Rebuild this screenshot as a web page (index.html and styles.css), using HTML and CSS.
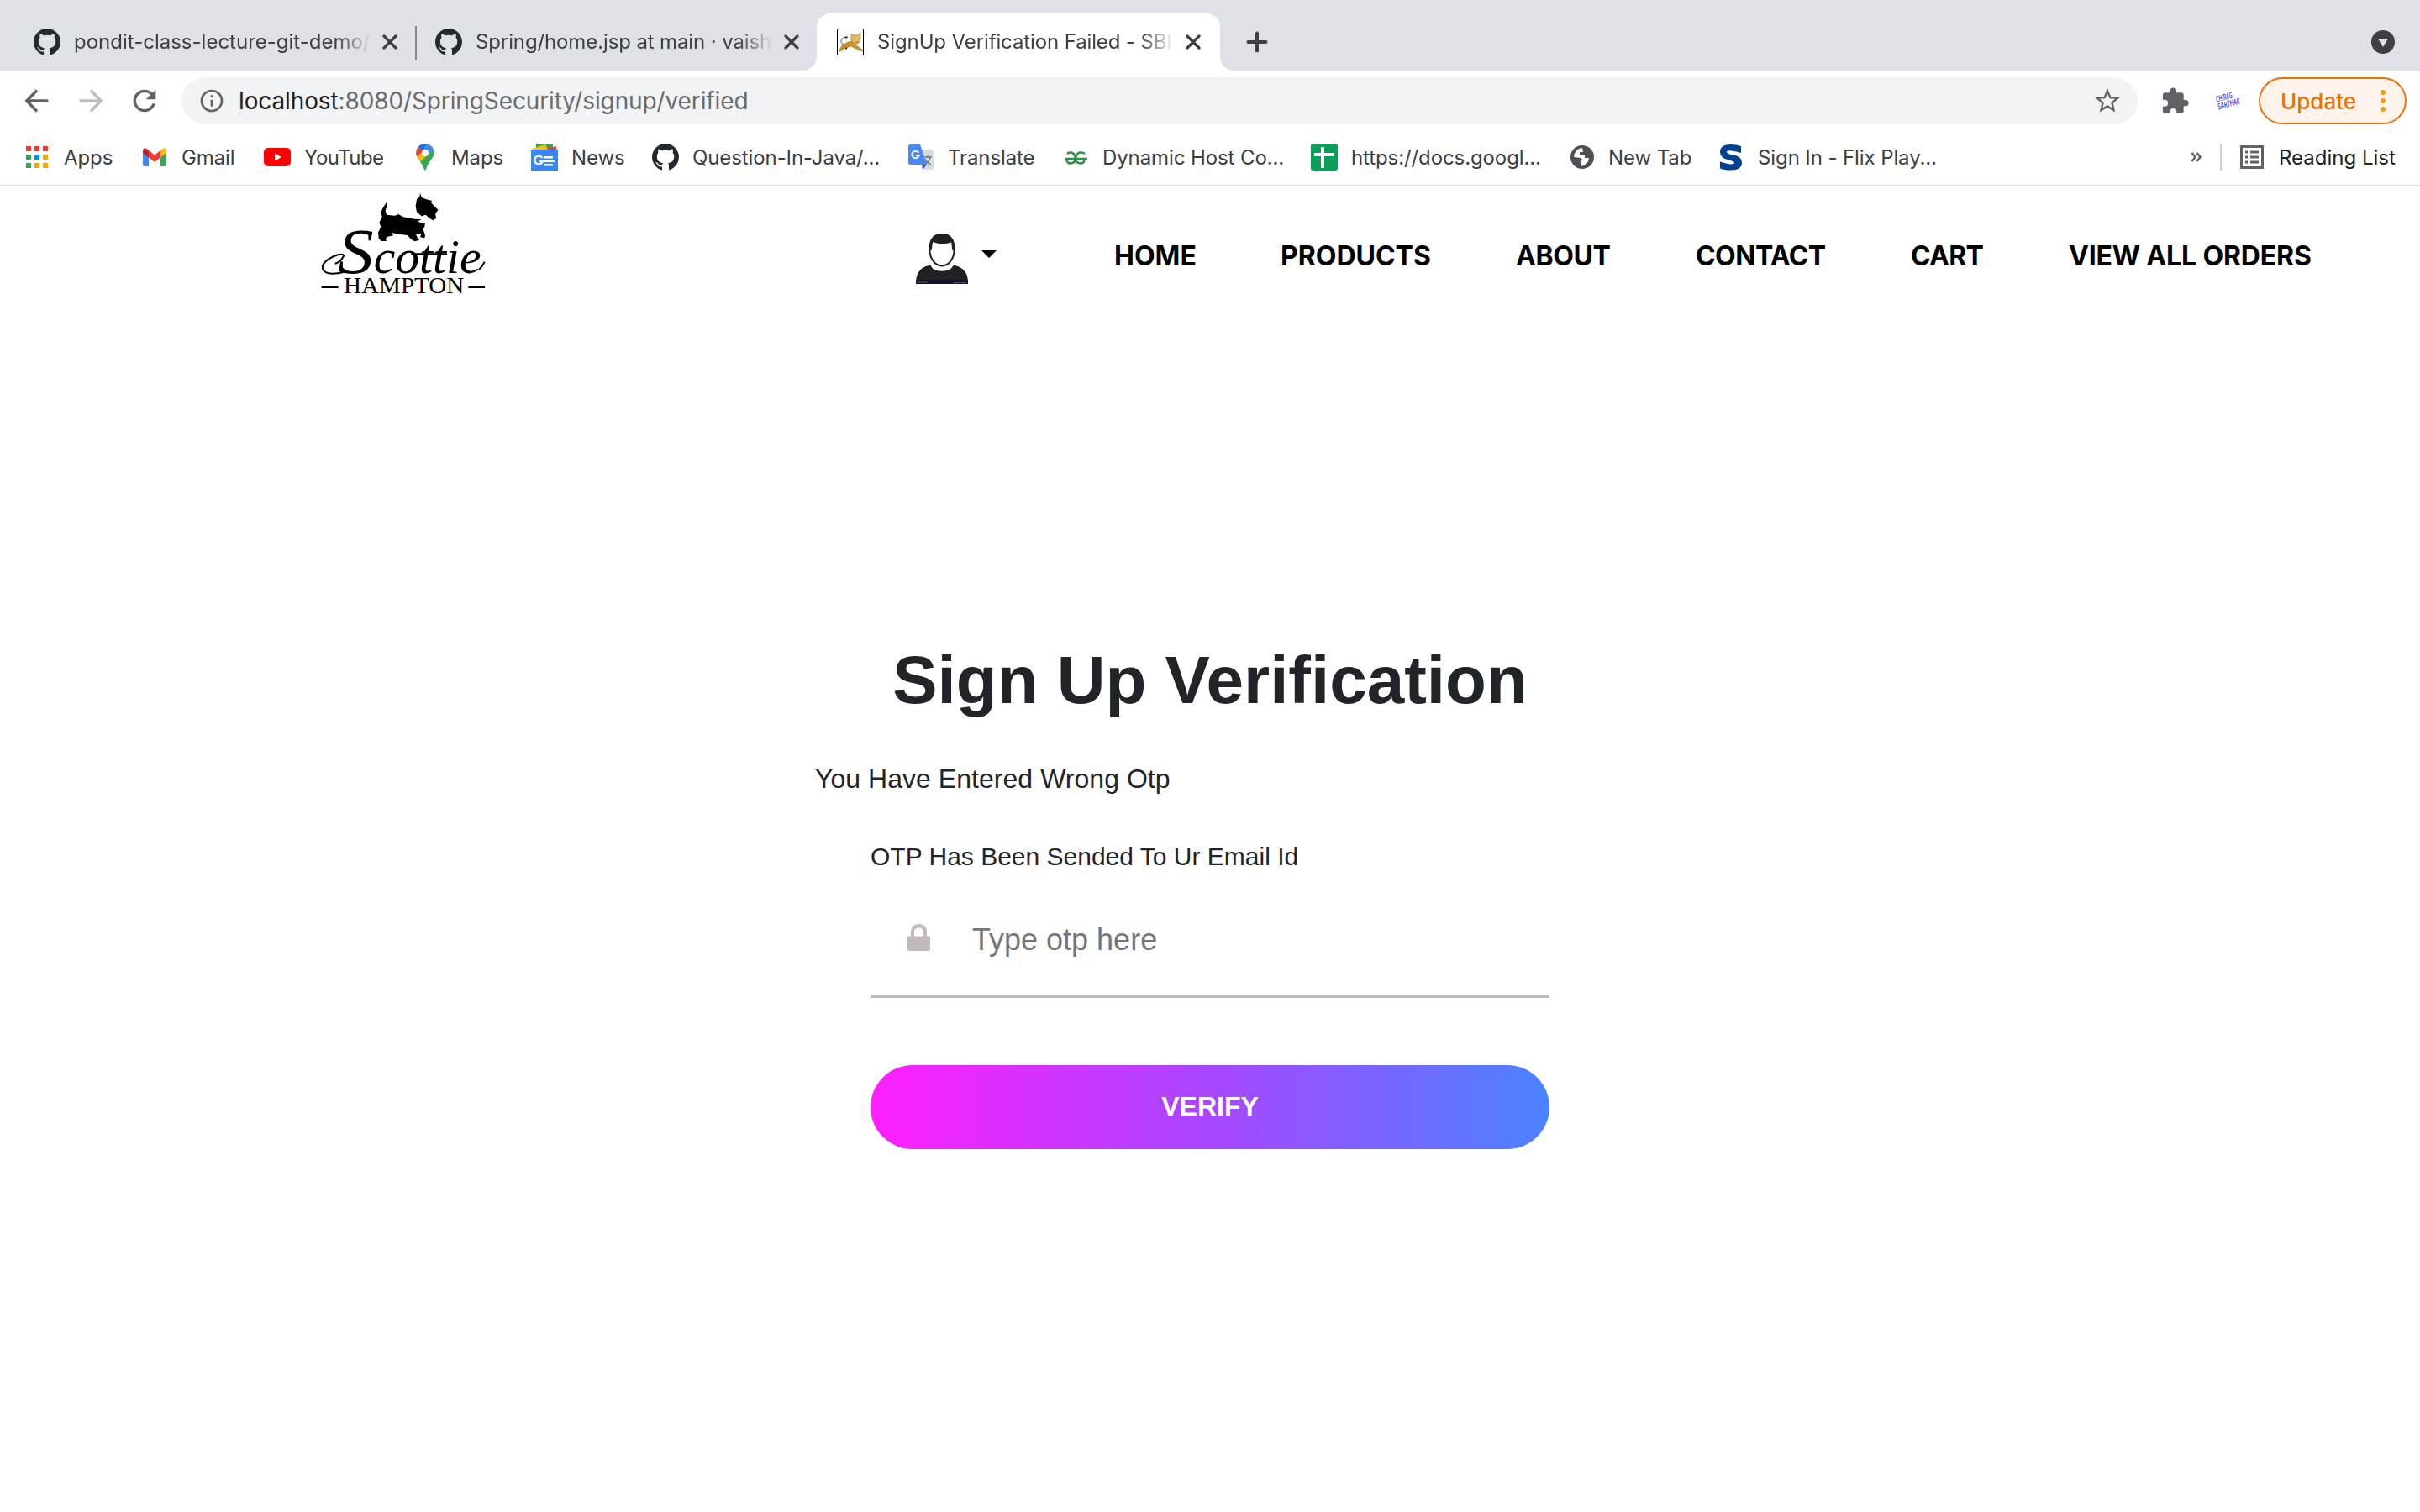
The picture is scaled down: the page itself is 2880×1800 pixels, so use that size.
FILE: index.html
```html
<!DOCTYPE html>
<html lang="en">
<head>
<meta charset="utf-8">
<title>SignUp Verification Failed</title>
<link rel="stylesheet" href="styles.css">
</head>
<body>
<svg class="defs" width="0" height="0">
  <symbol id="github" viewBox="0 0 16 16"><path d="M8 0C3.58 0 0 3.58 0 8c0 3.54 2.29 6.53 5.47 7.59.4.07.55-.17.55-.38 0-.19-.01-.82-.01-1.49-2.01.37-2.53-.49-2.69-.94-.09-.23-.48-.94-.82-1.13-.28-.15-.68-.52-.01-.53.63-.01 1.08.58 1.23.82.72 1.21 1.87.87 2.33.66.07-.52.28-.87.51-1.07-1.78-.2-3.64-.89-3.64-3.95 0-.87.31-1.59.82-2.15-.08-.2-.36-1.02.08-2.12 0 0 .67-.21 2.2.82.64-.18 1.32-.27 2-.27s1.36.09 2 .27c1.53-1.04 2.2-.82 2.2-.82.44 1.1.16 1.92.08 2.12.51.56.82 1.27.82 2.15 0 3.07-1.87 3.75-3.65 3.95.29.25.54.73.54 1.48 0 1.07-.01 1.93-.01 2.2 0 .21.15.46.55.38A8.01 8.01 0 0 0 16 8c0-4.42-3.58-8-8-8z"/></symbol>
  <symbol id="close" viewBox="0 0 18 18"><path d="M2 2 16 16M16 2 2 16" stroke="#3c4043" stroke-width="3.2" stroke-linecap="round"/></symbol>
</svg>

<div class="tabstrip">
  <div class="tab tab-first">
    <svg class="favicon gh"><use href="#github"/></svg>
    <span class="tab-title">pondit-class-lecture-git-demo/</span>
    <svg class="close"><use href="#close"/></svg>
  </div>
  <div class="tab-divider"></div>
  <div class="tab tab-second">
    <svg class="favicon gh"><use href="#github"/></svg>
    <span class="tab-title tight">Spring/home.jsp at main · vaish</span>
    <svg class="close"><use href="#close"/></svg>
  </div>
  <div class="tab tab-active">
    <svg class="favicon" viewBox="0 0 32 32">
      <rect x=".5" y=".5" width="31" height="31" fill="#fff" stroke="#000" stroke-width="1"/>
      <path d="M12 20Q4 19 5 14Q7 9 13 11" fill="none" stroke="#444" stroke-width=".8"/>
      <path d="M9 10l4-1-2 3zM8 21l5 1-2 3z" fill="#222"/>
      <path d="M2 27 6 20 13 16 18 15 22 19 30 25 31 27 26 26 17 21 10 23 5 27Z" fill="#cf8f2b" stroke="#8f641f" stroke-width=".4"/>
      <path d="M17 6 20 8 25 8 28 5 28 12 26 17 22 19 17 14Z" fill="#eebd55" stroke="#8f641f" stroke-width=".6"/>
      <path d="M20 12l2 1m3 0 2-1m-5 4h3" stroke="#6b4a1c" stroke-width=".8"/>
    </svg>
    <span class="tab-title tight">SignUp Verification Failed - SBI</span>
    <svg class="close"><use href="#close"/></svg>
  </div>
  <svg class="new-tab" viewBox="0 0 26 26"><path d="M13 2.500V23.500M2.500 13H23.500" stroke="#3c4043" stroke-width="4" stroke-linecap="round"/></svg>
  <svg class="tab-search" viewBox="0 0 28 28"><circle cx="14" cy="14" r="14" fill="#3c4043"/><path d="M8 10H20L14 20Z" fill="#dee1e6"/></svg>
</div>

<div class="toolbar">
  <svg class="nav-icon" viewBox="0 0 24 24" fill="none" stroke="#5f6368" stroke-width="2"><path d="M20 12H5M12 4.500 4.700 12 12 19.500"/></svg>
  <svg class="nav-icon" viewBox="0 0 24 24" fill="none" stroke="#babcbe" stroke-width="2"><path d="M4 12H19M12 4.500 19.300 12 12 19.500"/></svg>
  <svg class="nav-icon" viewBox="0 0 24 24" fill="#5f6368"><path d="M17.650 6.350A8 8 0 1 0 19.730 14h-2.080A6 6 0 1 1 12 6c1.660 0 3.140.69 4.220 1.780L13 11h7V4z"/></svg>
  <div class="omnibox">
    <svg class="info" viewBox="0 0 24 24" fill="#5f6368"><path d="M11 7h2v2h-2zm0 4h2v6h-2zm1-9a10 10 0 1 0 0 20 10 10 0 0 0 0-20zm0 18a8 8 0 1 1 0-16 8 8 0 0 1 0 16z"/></svg>
    <span class="url"><b>localhost</b>:8080/SpringSecurity/signup/verified</span>
    <svg class="star" viewBox="0 0 24 24" fill="#5f6368"><path d="M22 9.240l-7.190-.62L12 2 9.190 8.630 2 9.240l5.460 4.730L5.820 21 12 17.270 18.180 21l-1.630-7.030zM12 15.400l-3.760 2.270 1-4.280-3.320-2.880 4.380-.38L12 6.100l1.710 4.040 4.380.38-3.320 2.880 1 4.280z"/></svg>
  </div>
  <svg class="puzzle" viewBox="0 0 24 24" fill="#5f6368"><path d="M20.500 11H19V7c0-1.100-.9-2-2-2h-4V3.500a2.500 2.500 0 0 0-5 0V5H4c-1.100 0-1.990.9-1.990 2v3.800H3.500a2.700 2.700 0 0 1 0 5.400H2V20c0 1.100.9 2 2 2h3.800v-1.500a2.700 2.700 0 0 1 5.400 0V22H17c1.100 0 2-.9 2-2v-4h1.500a2.500 2.500 0 0 0 0-5z"/></svg>
  <svg class="extension" viewBox="0 0 32 28"><g transform="rotate(-15 16 14)" fill="#3a40e0" font-family="Open Sans" font-weight="600" font-style="italic"><text x="2" y="12" font-size="10" textLength="20" lengthAdjust="spacingAndGlyphs">CHIRAG</text><text x="2" y="21" font-size="10" textLength="27" lengthAdjust="spacingAndGlyphs">SARTHAK</text></g></svg>
  <div class="update"><span>Update</span><svg viewBox="0 0 6 26" fill="#fa9a00"><circle cx="3" cy="3" r="3"/><circle cx="3" cy="13" r="3"/><circle cx="3" cy="23" r="3"/></svg></div>
</div>

<div class="bookmarks">
  <div class="bookmark-list">
    <div class="bookmark"><svg viewBox="0 0 32 32"><path d="M3 3h6v6H3zm10 0h6v6h-6zm10 0h6v6h-6z" fill="#f8342c"/><path d="M3 13h6v6H3zM3 23h6v6H3z" fill="#2fa157"/><path d="M13 13h6v6h-6z" fill="#0b8bf4"/><path d="M23 13h6v6h-6zM13 23h6v6h-6zm10 0h6v6h-6z" fill="#f8a400"/></svg><span>Apps</span></div>
    <div class="bookmark"><svg viewBox="0 0 32 32"><path d="M2 9v16q0 2 2 2h5V14z" fill="#4285f4"/><path d="M23 14v13h5q2 0 2-2V9z" fill="#34a853"/><path d="M9 8l7 5.500L23 8v8.500L16 22l-7-5.500z" fill="#ea4335"/><path d="M2 9.500Q2 5 5.500 5.400L9 8v8.500l-7-5.500z" fill="#c5221f"/><path d="M30 9.500Q30 5 26.500 5.400L23 8v8.500l7-5.500z" fill="#fbbc04"/></svg><span>Gmail</span></div>
    <div class="bookmark youtube"><svg viewBox="0 0 32 32"><rect y="5" width="32" height="22" rx="5" fill="#f00"/><path d="M13 11.500v9l8-4.500z" fill="#fff"/></svg><span>YouTube</span></div>
    <div class="bookmark"><svg viewBox="0 0 32 32"><path d="M17 0a11 11 0 0 0-8.300 3.900l5.300 5 6-8.300Q18.500 0 17 0z" fill="#1a73e8"/><path d="M8.700 3.900A11 11 0 0 0 7.500 16l7.500-7.500z" fill="#ea4335"/><path d="M20 .6l-6 8.300 6.500 4L27 6.700A11 11 0 0 0 20 .6z" fill="#4285f4"/><path d="M7.500 16q.8 2 3.500 5.500L22 11l-8-1z" fill="#fbbc04"/><path d="M27 6.700 11 21.500q3.500 4.500 5 9.500.9 1.500 1.800 0 1-5 5.200-10.500c5-6.500 6-9 4-13.800z" fill="#34a853"/><circle cx="17" cy="11" r="4" fill="#fff"/></svg><span>Maps</span></div>
    <div class="bookmark"><svg viewBox="0 0 32 32"><path d="M6 0h20v10H6z" fill="#34a853"/><path d="M16 6l14-3 1 7H16z" fill="#ea4335"/><path d="M1 6 17 1l4 8H3z" fill="#fbbc04"/><path d="M0 7h32v25H0z" fill="#3a86f7"/><path d="M13.500 17A5 5 0 1 0 14 21H10" fill="none" stroke="#fff" stroke-width="2.400"/><path d="M16 15h10v2.500H16zm0 4.500h12V22H16zm0 4.500h10v2.500H16z" fill="#fff"/></svg><span>News</span></div>
    <div class="bookmark"><svg class="gh"><use href="#github"/></svg><span>Question-In-Java/...</span></div>
    <div class="bookmark"><svg viewBox="0 0 32 32"><path d="M13 7h16q2 0 2 2v20q0 2-2 2H20z" fill="#dcdcdc"/><path d="M17 25h6l-5 6z" fill="#3153c9"/><path d="M3 1h12l8 24H3q-2 0-2-2V3q0-2 2-2z" fill="#4889f4"/><path d="M13.200 10.800A4.200 4.200 0 1 0 13.700 14H10" fill="none" stroke="#fff" stroke-width="1.900"/><path d="M20 16h9M24 13v3M27 16q-1 6-7 9M21 18q2 5 7 7" fill="none" stroke="#607d8b" stroke-width="1.500"/></svg><span>Translate</span></div>
    <div class="bookmark"><svg viewBox="0 0 32 32"><path d="M6 12q2-2 5-1.500 4 1 5 7 1-6 5-7 4-.5 6 1.500M6 19q-1 4 4 4.500 6-.5 6-6 0 5.500 6 6 5-.5 4-4.500M3 18H30" fill="none" stroke="#2f8d46" stroke-width="2.500"/></svg><span>Dynamic Host Co...</span></div>
    <div class="bookmark"><svg viewBox="0 0 32 32"><rect width="32" height="32" rx="3" fill="#0a9f58"/><path d="M4 11h8V4h4v7h12v4H16v14h-4V15H4z" fill="#fff"/></svg><span>https://docs.googl...</span></div>
    <div class="bookmark"><svg viewBox="0 0 32 32"><circle cx="17" cy="16" r="14" fill="#4d5156"/><path d="M17 5q-9 1-10 11l8 1 2 2-2 2v6q9-1 10-10h-5v-3l-6-1v-3h4z" fill="#fff"/></svg><span>New Tab</span></div>
    <div class="bookmark"><svg viewBox="0 0 32 32"><path d="M28 3v8Q11 6 11 10q0 2 8 3.500 10 2 10 9 0 9-13 9-8 0-13-2v-8q16 5 17 1.500 0-2-7-3.500Q3 17 3 10 3 1 16 1q6 0 12 2z" fill="#00418f"/></svg><span>Sign In - Flix Play...</span></div>
  </div>
  <svg class="more" viewBox="0 0 14 14"><path d="M1.500 2l4 5-4 5M7.500 2l4 5-4 5" fill="none" stroke="#5f6368" stroke-width="2.500"/></svg>
  <div class="bar-divider"></div>
  <svg class="reading-icon" viewBox="0 0 28 28"><path d="M1.500 1.500h25v25h-25z" fill="none" stroke="#5f6368" stroke-width="3"/><path d="M6 6.500h3v3H6zm6 0h10v3H12zM6 12.500h3v3H6zm6 0h10v3H12zM6 18.500h3v3H6zm6 0h10v3H12z" fill="#5f6368"/></svg>
  <span class="reading">Reading List</span>
</div>

<header class="site-header">
  <svg class="logo" viewBox="0 21 720 429">
    <path d="M300 78 302 92 296 105 300 122 330 125 342 120 360 130 400 137 424 138 412 146 432 154 438 150 436 165 430 172 438 195 436 205 420 202 424 190 405 192 412 208 418 212 400 217 388 210 375 195 350 192 318 186 324 196 304 200 296 208 300 216 280 216 272 205 270 185 280 165 274 150 284 130 280 112 290 92Z"/>
    <path d="M420 45 426 60 440 66 462 72 460 80 484 104 474 120 478 134 466 142 450 132 440 122 425 127 408 112 404 92 408 66 418 58Z"/>
    <path d="M116 296Q134 294 148 268 142 258 112 270 66 292 72 316 84 342 150 326" fill="none" stroke="#000" stroke-width="6"/>
    <path d="M388 262H516M630 318Q642 308 650 290" fill="none" stroke="#000" stroke-width="6"/>
    <text y="330" font-family="Liberation Serif" font-style="italic"><tspan x="126" font-size="226" textLength="128" lengthAdjust="spacingAndGlyphs">S</tspan><tspan x="254" font-size="168" textLength="384" lengthAdjust="spacingAndGlyphs">cottie</tspan></text>
    <path d="M68 381H128M592 381H651" stroke="#000" stroke-width="6"/>
    <text x="147" y="403" font-family="Liberation Serif" font-size="84" textLength="430" lengthAdjust="spacingAndGlyphs">HAMPTON</text>
  </svg>
  <svg class="person" viewBox="60 53 186 181">
    <ellipse cx="153" cy="112" rx="44" ry="57" fill="#fff" stroke="#231f20" stroke-width="6"/>
    <path d="M107 118Q102 53 153 53T199 118L190 112 187 85Q153 96 120 83L116 112Z" fill="#231f20"/>
    <path d="M112 167Q120 188 153 188T194 167Q242 175 246 220V234H60V220Q66 172 112 167Z" fill="#231f20"/>
    <path d="M60 219H246V234H60Z" fill="#12102b"/><path d="M66 228H100M194 230H240" stroke="#777489" stroke-width="3" stroke-dasharray="5 2"/>
  </svg>
  <svg class="caret" viewBox="0 0 18 9"><path d="M0 0H18L9 9Z"/></svg>
  <nav class="menu"><a>HOME</a><a>PRODUCTS</a><a class="about">ABOUT</a><a class="contact">CONTACT</a><a class="cart">CART</a><a class="orders">VIEW ALL ORDERS</a></nav>
</header>

<main class="signup">
  <h1>Sign Up Verification</h1>
  <p class="error">You Have Entered Wrong Otp</p>
  <div class="form">
    <label>OTP Has Been Sended To Ur Email Id</label>
    <div class="field">
      <svg viewBox="0 0 27 32" fill="#c2b9b9"><path d="M2 14.500H4V10Q4 0 13.500 0T23 10v4.500h2q2 0 2 2V30q0 2-2 2H2q-2 0-2-2V16.500q0-2 2-2zm6 0H19V10Q19 4.500 13.500 4.500T8 10z"/></svg>
      <span>Type otp here</span>
    </div>
    <div class="button">VERIFY</div>
  </div>
</main>
</body>
</html>
```
FILE: styles.css
```css
* { box-sizing: border-box; }
body { margin: 0; width: 2880px; height: 1800px; overflow: hidden; background: #fff; font-family: Inter, sans-serif; color: #3c4043; }
svg { display: block; flex: none; }
.defs { position: absolute; }

.tabstrip { display: flex; height: 84px; background: #dee1e6; font-size: 24px; }
.tab { display: flex; align-items: center; height: 68px; margin-top: 16px; flex: none; }
.tab-first { width: 494px; padding-left: 40px; }
.tab-second { width: 476px; padding-left: 22px; }
.tab-divider { width: 2px; height: 40px; margin-top: 31px; background: #85888d; }
.tab-active { position: relative; width: 480px; padding-left: 24px; background: #fff; border-radius: 16px 16px 0 0; }
.tab-active::before, .tab-active::after { content: ""; position: absolute; bottom: 0; width: 16px; height: 16px; }
.tab-active::before { left: -16px; background: radial-gradient(circle at 0 0, transparent 15.500px, #fff 16px); }
.tab-active::after { right: -16px; background: radial-gradient(circle at 100% 0, transparent 15.500px, #fff 16px); }
.favicon { width: 32px; height: 32px; }
.gh { fill: #24292f; }
.tab-title { width: 354px; margin-left: 16px; line-height: 36px; white-space: nowrap; -webkit-mask-image: linear-gradient(to right, #000 312px, transparent 354px); mask-image: linear-gradient(to right, #000 312px, transparent 354px); }
.tight { letter-spacing: -.12px; }
.close { width: 18px; height: 18px; margin-left: 13px; }
.new-tab { width: 26px; height: 26px; margin: 37px 0 0 31px; }
.tab-search { width: 28px; height: 28px; margin: 36px 30px 0 auto; }

.toolbar { display: flex; align-items: center; height: 72px; padding-left: 24px; }
.nav-icon { width: 40px; height: 40px; margin-right: 24px; }
.omnibox { display: flex; align-items: center; width: 2328px; height: 56px; padding: 0 18px 0 20px; border-radius: 28px; background: #f1f3f4; }
.info { width: 32px; height: 32px; }
.url { flex: 1; margin-left: 16px; font-size: 28px; letter-spacing: -.12px; color: #696b6e; }
.url b { font-weight: 400; color: #202124; }
.star { width: 36px; height: 36px; }
.puzzle { width: 35px; height: 35px; margin-left: 27px; }
.extension { width: 32px; height: 28px; margin-left: 30px; overflow: visible; }
.update { display: flex; align-items: center; justify-content: space-between; width: 176px; height: 56px; margin-left: 20px; padding: 0 23px 0 24px; border: 2px solid #e8710a; border-radius: 28px; background: #fef3ea; font-size: 26px; font-weight: 500; color: #e8710a; }
.update svg { width: 6px; height: 26px; }

.bookmarks { display: flex; align-items: center; height: 66px; padding-bottom: 2px; border-bottom: 2px solid #dadce0; font-size: 24px; }
.bookmark-list { display: grid; grid-template-columns: 140px 146px 175px 143px 144px 304px 184px 296px 306px 178px auto; width: 2580px; padding-left: 28px; letter-spacing: -.1px; }
.bookmark { display: flex; align-items: center; white-space: nowrap; }
.bookmark svg { width: 32px; height: 32px; margin-right: 16px; }
.youtube { letter-spacing: -.55px; }
.more { width: 14px; height: 14px; margin-left: 27px; }
.bar-divider { width: 2px; height: 32px; margin-left: 21px; background: #cfd0d2; }
.reading-icon { width: 28px; height: 28px; margin-left: 22px; }
.reading { margin-left: 18px; color: #202124; white-space: nowrap; }

.site-header { display: flex; height: 164px; padding-left: 360px; align-items: center; }
.logo { width: 240px; height: 143px; align-self: flex-start; }
.person { width: 62px; height: 60px; margin: 8px 0 0 490px; }
.caret { width: 18px; height: 9px; margin: -3px 0 0 16px; }
.menu { display: grid; grid-template-columns: 198px 280px 214px 256px 188px auto; margin: 1px 0 0 140px; font-size: 32px; font-weight: 700; line-height: 40px; color: #000; white-space: nowrap; }
.about { letter-spacing: -.4px; }
.contact { letter-spacing: -.6px; }
.cart { letter-spacing: -.7px; }
.orders { letter-spacing: -.15px; }

.signup { display: flex; flex-direction: column; width: 940px; margin: 364px auto 0; font-family: "Liberation Sans", Arial, sans-serif; color: #212529; }
h1 { margin: 0; font-size: 80px; line-height: 120px; text-align: center; }
.error { margin: 33px 0 0; font-size: 32px; line-height: 48px; letter-spacing: .04px; }
.form { display: flex; flex-direction: column; margin: 46px 66px 0; }
label { font-size: 30px; line-height: 45px; }
.field { display: flex; align-items: center; height: 138px; margin-top: 8px; padding: 2px 0 0 44px; border-bottom: 4px solid #c2b9b9; font-size: 36px; color: #757575; }
.field svg { width: 27px; height: 32px; margin-top: -4px; }
.field span { margin: 2px 0 0 50px; }
.button { display: flex; align-items: center; justify-content: center; height: 100px; margin-top: 80px; padding-bottom: 2px; border-radius: 50px; background: linear-gradient(to right, #ff1fff, #a846ff 50%, #4a83ff); font-size: 32px; font-weight: 700; color: #fff; }
```
